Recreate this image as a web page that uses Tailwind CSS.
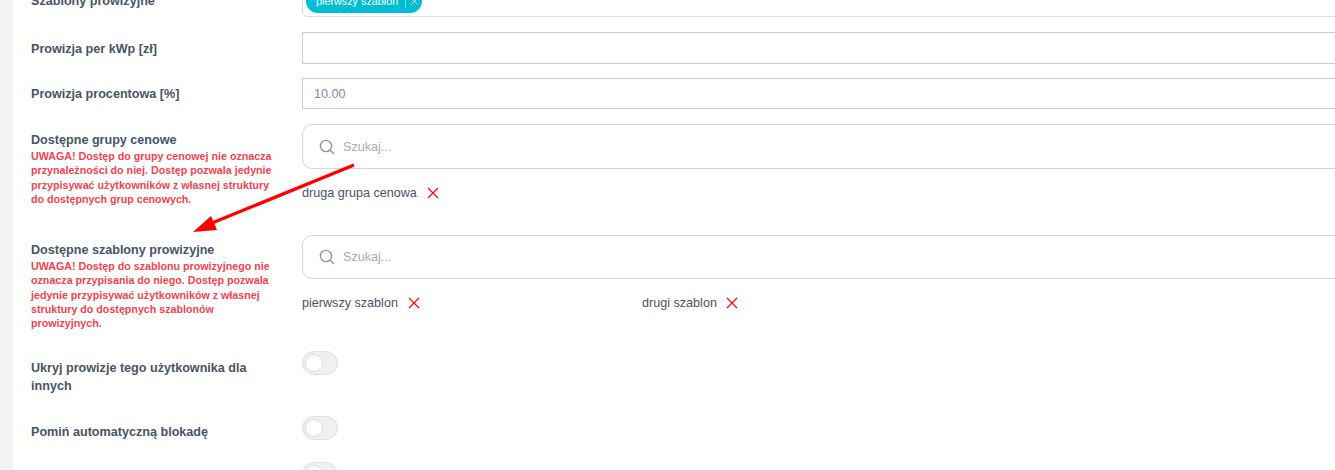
<!DOCTYPE html>
<html lang="pl">
<head>
    <meta charset="UTF-8">
    <title>Ustawienia prowizji</title>
    <script src="https://cdn.jsdelivr.net/npm/@tailwindcss/browser@4"></script>
</head>
<body class="bg-[#f3f3f3] font-['Liberation_Sans',Arial,sans-serif] text-[#475467]">
    <div class="relative h-[470px] w-[1335px] overflow-hidden">
        <div class="ml-[13px] h-[540px] -mt-[30px] bg-white pl-[18px]">
            <!-- tagi szablonow, gora ucieta -->
            <div class="flex h-[47px]">
                <div class="w-[271px] shrink-0 pt-[22px] text-[12.6px] leading-[18px] font-bold">Szablony prowizyjne</div>
                <div class="h-[47px] w-[1100px] shrink-0 rounded-[6px] border border-[#d9d9d9] pt-[18px] pl-[3px]">
                    <div class="flex h-[24px] w-[116px] items-center rounded-full bg-[#00bcd4] pl-[10px] text-[10.8px] text-white">pierwszy szablon
                        <span class="ml-[7px] flex h-[14px] items-center border-l border-white/40 pl-[5px]">
                            <svg class="h-[7px] w-[7px]" viewBox="0 0 7 7" fill="none" stroke="#ffffff" stroke-width="0.9"><path d="M0.5 0.5l6 6M6.5 0.5l-6 6"/></svg>
                        </span>
                    </div>
                </div>
            </div>
            <div class="mt-[15px] flex h-[32px] items-center">
                <div class="w-[271px] shrink-0 pt-[1px] text-[12.6px] leading-[18px] font-bold">Prowizja per kWp [zł]</div>
                <div class="h-full w-[1100px] shrink-0 border border-[#cccccc]"></div>
            </div>
            <div class="mt-[14px] flex h-[31px] items-center">
                <div class="w-[271px] shrink-0 text-[12.6px] leading-[18px] font-bold">Prowizja procentowa [%]</div>
                <div class="flex h-full w-[1100px] shrink-0 items-center border border-[#cccccc] pt-[1px] pl-[11px] text-[12.6px] text-[#7b8a9e]">10.00</div>
            </div>
            <div class="mt-[15px] flex h-[111px]">
                <div class="w-[271px] shrink-0 pt-[7px]">
                    <div class="text-[12.6px] leading-[18px] font-bold">Dostępne grupy cenowe</div>
                    <p class="w-[245px] text-[10.7px] leading-[14.3px] font-bold text-[#f5424f]">UWAGA! Dostęp do grupy cenowej nie oznacza przynależności do niej. Dostęp pozwala jedynie przypisywać użytkowników z własnej struktury do dostępnych grup cenowych.</p>
                </div>
                <div class="shrink-0">
                    <div class="flex h-[45px] w-[1100px] items-center rounded-[10px] border border-[#d5d5dc] pt-[1px] pl-[16px] text-[12.6px] text-[#a4acb8]">
                        <svg class="mr-[8px] h-[16px] w-[16px]" viewBox="0 0 16 16" fill="none" stroke="#8c949e" stroke-width="1.4"><circle cx="7" cy="7" r="5.6"/><path d="M11 11l4 4"/></svg>Szukaj...
                    </div>
                    <div class="mt-[15px] flex items-center text-[12.6px] leading-[18px]">druga grupa cenowa
                        <svg class="ml-[10px] h-[12px] w-[12px]" viewBox="0 0 12 12" fill="none" stroke="#ff0000" stroke-width="1.2"><path d="M1 1l10 10M11 1L1 11"/></svg>
                    </div>
                </div>
            </div>
            <div class="flex h-[117px]">
                <div class="w-[271px] shrink-0 pt-[6px]">
                    <div class="text-[12.6px] leading-[18px] font-bold">Dostępne szablony prowizyjne</div>
                    <p class="w-[245px] text-[10.7px] leading-[14.3px] font-bold text-[#f5424f]">UWAGA! Dostęp do szablonu prowizyjnego nie oznacza przypisania do niego. Dostęp pozwala jedynie przypisywać użytkowników z własnej struktury do dostępnych szablonów prowizyjnych.</p>
                </div>
                <div class="shrink-0">
                    <div class="flex h-[44px] w-[1100px] items-center rounded-[10px] border border-[#d5d5dc] pl-[16px] text-[12.6px] text-[#a4acb8]">
                        <svg class="mr-[8px] h-[16px] w-[16px]" viewBox="0 0 16 16" fill="none" stroke="#8c949e" stroke-width="1.4"><circle cx="7" cy="7" r="5.6"/><path d="M11 11l4 4"/></svg>Szukaj...
                    </div>
                    <div class="mt-[15px] flex text-[12.6px] leading-[18px]">
                        <div class="flex w-[340px] items-center">pierwszy szablon
                            <svg class="ml-[10px] h-[12px] w-[12px]" viewBox="0 0 12 12" fill="none" stroke="#ff0000" stroke-width="1.2"><path d="M1 1l10 10M11 1L1 11"/></svg>
                        </div>
                        <div class="flex items-center">drugi szablon
                            <svg class="ml-[9px] h-[12px] w-[12px]" viewBox="0 0 12 12" fill="none" stroke="#ff0000" stroke-width="1.2"><path d="M1 1l10 10M11 1L1 11"/></svg>
                        </div>
                    </div>
                </div>
            </div>
            <div class="flex h-[64px]">
                <div class="w-[245px] shrink-0 pt-[7px] text-[12.6px] leading-[18px] font-bold">Ukryj prowizje tego użytkownika dla innych</div>
                <div class="-mt-[1px] ml-[26px] shrink-0">
                    <div class="h-[24px] w-[36px] rounded-full border border-[#e0e0e0] bg-[#f0f0f0] p-[2px]"><div class="h-[18px] w-[18px] rounded-full border border-[#dddddd] bg-white"></div></div>
                </div>
            </div>
            <div class="flex h-[46px]">
                <div class="w-[271px] shrink-0 pt-[7px] text-[12.6px] leading-[18px] font-bold">Pomiń automatyczną blokadę</div>
                <div class="shrink-0">
                    <div class="h-[24px] w-[36px] rounded-full border border-[#e0e0e0] bg-[#f0f0f0] p-[2px]"><div class="h-[18px] w-[18px] rounded-full border border-[#dddddd] bg-white"></div></div>
                </div>
            </div>
            <div class="ml-[271px] h-[24px] w-[36px] rounded-full border border-[#e0e0e0] bg-[#f0f0f0] p-[2px]"><div class="h-[18px] w-[18px] rounded-full border border-[#dddddd] bg-white"></div></div>
        </div>
        <!-- strzalka narysowana na zrzucie -->
        <svg class="absolute top-0 left-0 h-[470px] w-[1335px]" viewBox="0 0 1335 470" fill="none">
            <path d="M354 165L212 223" stroke="#ff0000" stroke-width="3.4"/>
            <path d="M193 232L211 216L217 230Z" fill="#ff0000"/>
        </svg>
    </div>
</body>
</html>
